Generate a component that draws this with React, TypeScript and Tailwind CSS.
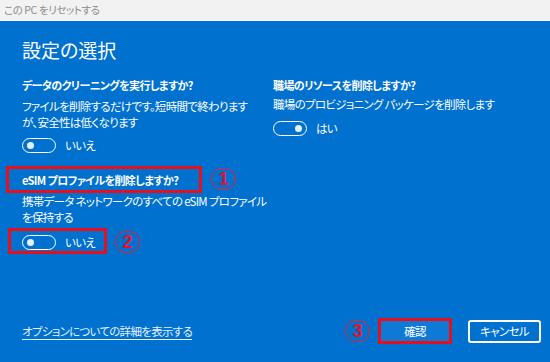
import React from "react";

const font = {
  fontFamily: "'Noto Sans CJK JP', 'Noto Sans', sans-serif",
};

const body = "text-[11.5px] leading-[16px] tracking-[-0.7px] whitespace-nowrap";
const heading = "text-[11px] leading-[16px] tracking-[-0.6px] font-bold whitespace-nowrap";

type ToggleProps = {
  on: boolean;
  label: string;
};

const Toggle: React.FC<ToggleProps> = ({ on, label }) => {
  return (
    <div className="flex items-center gap-[9px]">
      <div
        className={`w-[34px] h-[15px] rounded-full border-[1.5px] border-white flex items-center px-[4px] ${
          on ? "justify-end" : "justify-start"
        }`}
      >
        <div className="w-[7px] h-[7px] rounded-full bg-[#e6f0fa]" />
      </div>
      <span className={body}>{label}</span>
    </div>
  );
};

// red numbered circle used as annotation
const Marker: React.FC<{ n: string; className?: string }> = ({ n, className }) => (
  <span
    className={`w-[25px] h-[22px] rounded-full border-[1.5px] border-[#e8203a] text-[#e8102a] font-bold text-[18px] leading-none flex items-center justify-center font-['Liberation_Sans',sans-serif] tracking-normal ${className ?? ""}`}
  >
    {n}
  </span>
);

export default function App() {
  return (
    <div
      className="w-[550px] h-[362px] flex flex-col bg-[#0071cf] text-white [font-feature-settings:'palt']"
      style={font}
    >
      {/* window title */}
      <div className="h-[21px] bg-[#f2f2f2] border-b border-white pl-[4px] flex items-center text-[10.5px] tracking-[-0.4px] text-[#8c8c8c]">
        この PC をリセットする
      </div>

      <div className="flex-1 flex flex-col px-[22px]">
        <h1 className="mt-[15px] text-[19px] leading-[28px] font-normal">設定の選択</h1>

        <div className="mt-[13px] grid grid-cols-[251px_1fr]">
          <div>
            <div className={heading}>データのクリーニングを実行しますか?</div>
            <p className={`mt-[5px] ${body}`}>
              ファイルを削除するだけです。短時間で終わります
              <br />
              が、安全性は低くなります
            </p>
            <div className="mt-[7px]">
              <Toggle on={false} label="いいえ" />
            </div>
          </div>

          <div>
            <div className={heading}>職場のリソースを削除しますか?</div>
            <p className={`mt-[3px] ${body}`}>職場のプロビジョニング パッケージを削除します</p>
            <div className="mt-[8px]">
              <Toggle on={true} label="はい" />
            </div>
          </div>
        </div>

        <div className="mt-[19px] w-[251px]">
          <div className={`relative ${heading}`}>
            eSIM プロファイルを削除しますか?
            <span className="absolute left-[-16px] top-[-6px] w-[196px] h-[27px] border-[3px] border-[#e60f1e]" />
            <Marker n="1" className="absolute left-[189px] top-[-4px]" />
          </div>
          <p className={`mt-[5px] ${body}`}>
            携帯データ ネットワークのすべての eSIM プロファイル
            <br />
            を保持する
          </p>
          <div className="relative mt-[9px]">
            <Toggle on={false} label="いいえ" />
            <span className="absolute left-[-14px] top-[-6px] w-[99px] h-[26px] border-[3px] border-[#e60f1e]" />
            <Marker n="2" className="absolute left-[93px] top-[-3px]" />
          </div>
        </div>

        <div className="mt-auto mb-[18px] -mr-[13px] flex items-center justify-between">
          <a className={`${body} underline underline-offset-[3px] text-[#e4f0fb]`} href="#">
            オプションについての詳細を表示する
          </a>
          <div className="flex items-center">
            <Marker n="3" className="mr-[8px]" />
            <button className={`w-[74px] h-[26px] border-[3px] border-[#e60f1e] bg-[#0f7ad6] mr-[16px] ${body}`}>
              確認
            </button>
            <button className={`w-[73px] h-[23px] rounded-[3px] border-2 border-white ${body}`}>
              キャンセル
            </button>
          </div>
        </div>
      </div>
    </div>
  );
}
